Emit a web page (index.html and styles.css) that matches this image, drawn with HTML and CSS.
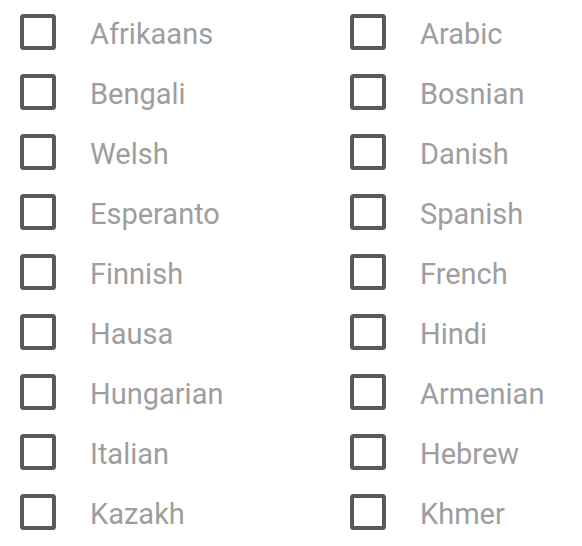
FILE: index.html
```html
<!DOCTYPE html>
<html>
<head>
<meta charset="utf-8">
<link rel="stylesheet" href="styles.css">
</head>
<body>
<div class="grid">
  <label class="item"><svg class="box" viewBox="0 0 48 48"><rect x="8" y="8" width="32" height="32" rx="1.5"/></svg><span>Afrikaans</span></label>
  <label class="item"><svg class="box" viewBox="0 0 48 48"><rect x="8" y="8" width="32" height="32" rx="1.5"/></svg><span>Arabic</span></label>
  <label class="item"><svg class="box" viewBox="0 0 48 48"><rect x="8" y="8" width="32" height="32" rx="1.5"/></svg><span>Bengali</span></label>
  <label class="item"><svg class="box" viewBox="0 0 48 48"><rect x="8" y="8" width="32" height="32" rx="1.5"/></svg><span>Bosnian</span></label>
  <label class="item"><svg class="box" viewBox="0 0 48 48"><rect x="8" y="8" width="32" height="32" rx="1.5"/></svg><span>Welsh</span></label>
  <label class="item"><svg class="box" viewBox="0 0 48 48"><rect x="8" y="8" width="32" height="32" rx="1.5"/></svg><span>Danish</span></label>
  <label class="item"><svg class="box" viewBox="0 0 48 48"><rect x="8" y="8" width="32" height="32" rx="1.5"/></svg><span>Esperanto</span></label>
  <label class="item"><svg class="box" viewBox="0 0 48 48"><rect x="8" y="8" width="32" height="32" rx="1.5"/></svg><span>Spanish</span></label>
  <label class="item"><svg class="box" viewBox="0 0 48 48"><rect x="8" y="8" width="32" height="32" rx="1.5"/></svg><span>Finnish</span></label>
  <label class="item"><svg class="box" viewBox="0 0 48 48"><rect x="8" y="8" width="32" height="32" rx="1.5"/></svg><span>French</span></label>
  <label class="item"><svg class="box" viewBox="0 0 48 48"><rect x="8" y="8" width="32" height="32" rx="1.5"/></svg><span>Hausa</span></label>
  <label class="item"><svg class="box" viewBox="0 0 48 48"><rect x="8" y="8" width="32" height="32" rx="1.5"/></svg><span>Hindi</span></label>
  <label class="item"><svg class="box" viewBox="0 0 48 48"><rect x="8" y="8" width="32" height="32" rx="1.5"/></svg><span>Hungarian</span></label>
  <label class="item"><svg class="box" viewBox="0 0 48 48"><rect x="8" y="8" width="32" height="32" rx="1.5"/></svg><span>Armenian</span></label>
  <label class="item"><svg class="box" viewBox="0 0 48 48"><rect x="8" y="8" width="32" height="32" rx="1.5"/></svg><span>Italian</span></label>
  <label class="item"><svg class="box" viewBox="0 0 48 48"><rect x="8" y="8" width="32" height="32" rx="1.5"/></svg><span>Hebrew</span></label>
  <label class="item"><svg class="box" viewBox="0 0 48 48"><rect x="8" y="8" width="32" height="32" rx="1.5"/></svg><span>Kazakh</span></label>
  <label class="item"><svg class="box" viewBox="0 0 48 48"><rect x="8" y="8" width="32" height="32" rx="1.5"/></svg><span>Khmer</span></label>
</div>
</body>
</html>
```
FILE: styles.css
```css
html, body {
  margin: 0;
  padding: 0;
  background: #ffffff;
}
.grid {
  display: grid;
  grid-template-columns: 330px 252px;
  grid-auto-rows: 60px;
  padding: 2px 0 0 14px;
}
.item {
  display: flex;
  align-items: center;
  font-family: Roboto, "Liberation Sans", sans-serif;
  font-size: 29px;
  color: #9e9e9e;
}
.item span {
  padding-top: 3px;
}
.box {
  width: 48px;
  height: 48px;
  flex: none;
  margin-right: 28px;
}
.box rect {
  fill: none;
  stroke: #595959;
  stroke-width: 4;
}
```
